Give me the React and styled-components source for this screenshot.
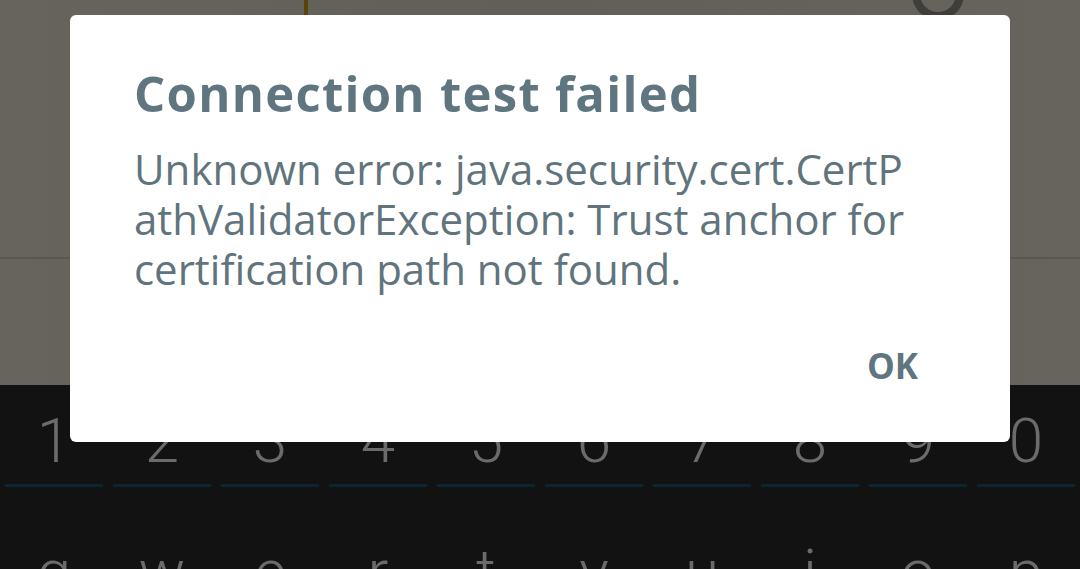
import React from "react";
import styled, { createGlobalStyle } from "styled-components";

const digits = ["1", "2", "3", "4", "5", "6", "7", "8", "9", "0"];
const letters = ["q", "w", "e", "r", "t", "y", "u", "i", "o", "p"];

const App = () => {
    return (
        <Screen>
            <GlobalStyle />
            <AppArea>
                <Cursor />
                <Ring viewBox="0 0 60 40">
                    <circle cx="30" cy="-6" r="22" fill="none" stroke="#3f3e3b" strokeWidth="8" />
                </Ring>
                <Divider />
            </AppArea>
            <Keyboard>
                <KeyRow>
                    {digits.map((d) => (
                        <NumKey key={d}>{d}</NumKey>
                    ))}
                </KeyRow>
                <KeyRow>
                    {letters.map((l) => (
                        <LetterKey key={l}>{l}</LetterKey>
                    ))}
                </KeyRow>
            </Keyboard>
            <Dialog>
                <Title>Connection test failed</Title>
                <Message>
                    Unknown error: java.security.cert.CertP
                    <br />
                    athValidatorException: Trust anchor for
                    <br />
                    certification path not found.
                </Message>
                <Actions>
                    <Button>OK</Button>
                </Actions>
            </Dialog>
        </Screen>
    );
};

export default App;

const GlobalStyle = createGlobalStyle`
html, body {
margin: 0;
padding: 0;
background: #121212;
overflow: hidden;
}
`;

const Screen = styled.div`
position: relative;
width: 1080px;
height: 569px;
overflow: hidden;
display: flex;
flex-direction: column;
font-family: "Open Sans", "Noto Sans", sans-serif;
`;

const AppArea = styled.div`
position: relative;
height: 385px;
flex-shrink: 0;
background: linear-gradient(90deg, #67645d 0%, #625f58 50%, #67645d 100%);
display: flex;
flex-direction: column;
`;

const Cursor = styled.div`
margin-left: 304px;
width: 4px;
height: 16px;
background: #5a4208;
`;

const Ring = styled.svg`
position: absolute;
top: 0;
left: 908px;
width: 60px;
height: 40px;
`;

const Divider = styled.div`
margin-top: 241px;
height: 2px;
background: #5a5751;
`;

const Keyboard = styled.div`
flex: 1;
background: #121212;
display: flex;
flex-direction: column;
`;

const KeyRow = styled.div`
display: grid;
grid-template-columns: repeat(10, 108px);
`;

const NumKey = styled.div`
margin: 0 5px;
padding-top: 25px;
height: 102px;
box-sizing: border-box;
border-bottom: 3px solid #0b2631;
text-align: center;
font-family: "Roboto", sans-serif;
font-weight: 300;
font-size: 62px;
line-height: 62px;
color: #6b6b6b;
`;

const LetterKey = styled.div`
padding-top: 54px;
text-align: center;
font-family: "Roboto", sans-serif;
font-weight: 300;
font-size: 62px;
line-height: 62px;
color: #6b6b6b;
`;

const Dialog = styled.div`
position: absolute;
top: 15px;
left: 70px;
width: 940px;
height: 427px;
box-sizing: border-box;
background: #ffffff;
border-radius: 6px;
padding: 48px 92px 0 64px;
display: flex;
flex-direction: column;
`;

const Title = styled.div`
font-weight: 700;
font-size: 49px;
line-height: 60px;
letter-spacing: 1.3px;
color: #5f7680;
`;

const Message = styled.div`
margin-top: 21px;
font-size: 42px;
line-height: 50px;
color: #5f747d;
white-space: nowrap;
`;

const Actions = styled.div`
margin-top: 52px;
display: flex;
justify-content: flex-end;
`;

const Button = styled.div`
font-weight: 700;
font-size: 35px;
line-height: 40px;
color: #5f7680;
`;
